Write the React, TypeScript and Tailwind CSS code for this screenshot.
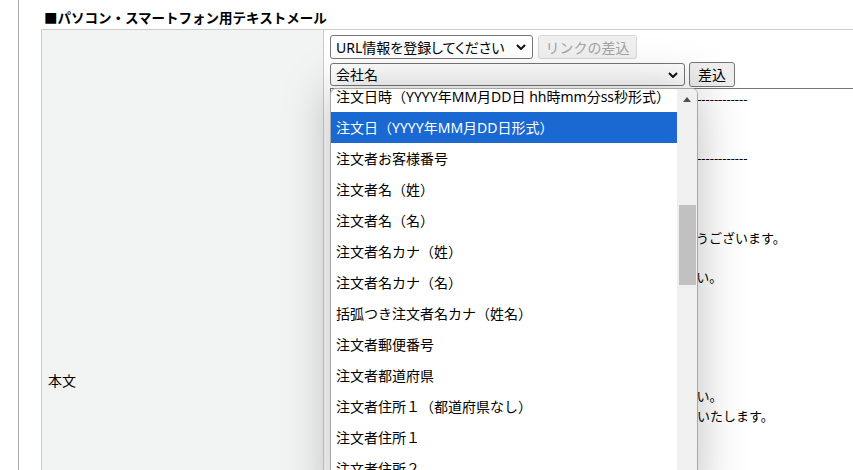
const options = [
  "注文日時（YYYY年MM月DD日 hh時mm分ss秒形式）",
  "注文日（YYYY年MM月DD日形式）",
  "注文者お客様番号",
  "注文者名（姓）",
  "注文者名（名）",
  "注文者名カナ（姓）",
  "注文者名カナ（名）",
  "括弧つき注文者名カナ（姓名）",
  "注文者郵便番号",
  "注文者都道府県",
  "注文者住所１（都道府県なし）",
  "注文者住所１",
  "注文者住所２",
];

const DASHES = "-".repeat(99);

const bodyLines = [
  DASHES,
  "{会社名}",
  "ご注文確認メール",
  DASHES,
  "",
  "{注文者名（姓）}{注文者名（名）} 様",
  "",
  "この度はオンラインショップをご利用いただき、誠にありがとうございます。",
  "",
  "ご注文内容を下記にご案内いたしますので、必ずご確認ください。",
  "",
  "【ご注文日】{注文日}",
  "【お支払方法】{支払方法}",
  "",
  "",
  "ご不明な点などございましたら、お気軽にお問い合わせください。",
  "今後とも当店のオンラインショップを引き続きよろしくお願いいたします。",
  "",
  "{署名}",
];

function Chevron() {
  return (
    <svg width="10" height="6" viewBox="0 0 10 6">
      <path d="M1 1l4 4 4-4" fill="none" stroke="#111" strokeWidth="2" />
    </svg>
  );
}

function FakeSelect({ label, className }: { label: string; className: string }) {
  return (
    <div
      className={`flex items-center justify-between rounded-[3px] border border-[#767676] bg-white pl-[5px] pr-[6px] text-[14px] ${className}`}
    >
      <span className="whitespace-nowrap [font-feature-settings:'palt']">{label}</span>
      <Chevron />
    </div>
  );
}

function OptionList() {
  return (
    <div className="absolute left-[6px] top-[58px] flex h-[420px] w-[368px] overflow-hidden rounded-[6px] border border-[#a6a6a6] bg-white shadow-[0_0_48px_rgba(0,0,0,0.26)]">
      {/* options */}
      <div className="flex-1 overflow-hidden">
        <div className="-mt-[8px]">
          {options.map((o, i) => (
            <div
              key={o}
              className={`flex h-[31px] items-center whitespace-nowrap pl-[5px] text-[14px] ${
                i === 1 ? "bg-[#1a68d2] text-white" : "text-black"
              }`}
            >
              {o}
            </div>
          ))}
        </div>
      </div>

      {/* scrollbar */}
      <div className="w-[20px] bg-[#f0f0f0]">
        <div className="flex justify-center pt-[8px]">
          <svg width="8" height="5" viewBox="0 0 8 5">
            <path d="M0 5L4 0L8 5Z" fill="#505050" />
          </svg>
        </div>
        <div className="ml-[2px] mt-[103px] h-[80px] w-[17px] bg-[#c1c1c1]" />
      </div>
    </div>
  );
}

export default function App() {
  return (
    <div className="h-[470px] w-full overflow-hidden bg-white font-['Noto_Sans','Noto_Sans_CJK_JP',sans-serif] text-black">
      <div className="ml-[18px] h-[760px] border-l border-[#a9a9a9] pl-[22px] pt-[8px]">
        <h2 className="pl-[3px] text-[13.5px] font-bold leading-[20px]">
          ■パソコン・スマートフォン用テキストメール
        </h2>

        <div className="mt-[1px] flex h-[702px] border-t border-[#cccccc]">
          {/* Label */}
          <div className="flex w-[283px] shrink-0 items-center border-x border-[#cccccc] bg-[#f2f3f3] pl-[6px] text-[14px]">
            本文
          </div>

          {/* Field */}
          <div className="relative min-w-0 flex-1 pl-[6px] pt-[5px]">
            <div className="flex h-[24px] gap-[5px]">
              <FakeSelect label="URL情報を登録してください" className="w-[203px]" />
              <div className="flex w-[99px] items-center justify-center rounded-[3px] border border-[#d6d6d6] bg-[#f0f0f0] text-[14px] text-[#a3a3a3]">
                リンクの差込
              </div>
            </div>

            <div className="mt-[3px] flex h-[25px] items-center gap-[4px]">
              <FakeSelect label="会社名" className="h-[23px] w-[355px]" />
              <div className="flex h-[25px] w-[46px] items-center justify-center rounded-[3px] border border-[#767676] bg-[#efefef] text-[14px]">
                差込
              </div>
            </div>

            <div className="mt-[1px] h-[630px] w-[600px] border border-[#767676] px-[2px] py-[1px] text-[13px] leading-[19.8px]">
              {bodyLines.map((l, i) => (
                <div key={i} className="h-[19.8px] whitespace-pre">
                  {l}
                </div>
              ))}
            </div>

            <OptionList />
          </div>
        </div>
      </div>
    </div>
  );
}
